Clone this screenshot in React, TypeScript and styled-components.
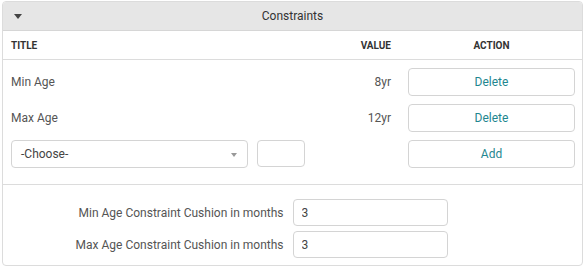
import styled, { createGlobalStyle } from "styled-components";

const GlobalStyle = createGlobalStyle`
  html, body {
    margin: 0;
    padding: 0;
    background: #fff;
    font-family: Roboto, "Liberation Sans", sans-serif;
  }
  * { box-sizing: border-box; }
`;

const Panel = styled.div`
  margin: 1px 2px;
  border: 1px solid #dcdcdc;
  border-radius: 4px;
  overflow: hidden;
  background: #fff;
`;

const PanelHeader = styled.div`
  position: relative;
  height: 29px;
  background: #e6e6e6;
  border-bottom: 1px solid #d6d6d6;
  display: flex;
  align-items: center;
  justify-content: center;
  font-size: 12px;
  color: #333;
`;

const Caret = styled.span`
  position: absolute;
  left: 11px;
  top: 12px;
  width: 0;
  height: 0;
  border-left: 4px solid transparent;
  border-right: 4px solid transparent;
  border-top: 5px solid #444;
`;

const Grid = styled.div`
  display: grid;
  grid-template-columns: minmax(0, 1fr) 80px 167px;
  column-gap: 17px;
  align-items: center;
  padding: 0 7px 0 8px;
`;

const HeadRow = styled(Grid)`
  height: 29px;
  border-bottom: 1px solid #dcdcdc;
`;

const Th = styled.div<{ $align?: string }>`
  font-size: 10px;
  font-weight: 700;
  color: #333;
  text-align: ${(p) => p.$align || "left"};
`;

const Body = styled(Grid)`
  row-gap: 8px;
  padding-top: 8px;
  padding-bottom: 16px;
  border-bottom: 1px solid #dcdcdc;
`;

const Cell = styled.div<{ $align?: string }>`
  font-size: 12px;
  color: #555;
  text-align: ${(p) => p.$align || "left"};
`;

const Button = styled.button`
  height: 28px;
  width: 100%;
  padding: 0;
  background: #fff;
  border: 1px solid #d4d4d4;
  border-radius: 4px;
  font-family: inherit;
  font-size: 12px;
  color: #1f8790;
  cursor: pointer;
`;

const Controls = styled.div`
  display: flex;
  gap: 9px;
`;

const Select = styled.div`
  position: relative;
  flex: none;
  width: 237px;
  height: 28px;
  border: 1px solid #d4d4d4;
  border-radius: 4px;
  display: flex;
  align-items: center;
  padding-left: 9px;
  font-size: 12px;
  color: #444;
`;

const SelectArrow = styled.span`
  position: absolute;
  right: 10px;
  top: 12px;
  border-left: 3px solid transparent;
  border-right: 3px solid transparent;
  border-top: 4px solid #999;
`;

const Input = styled.input<{ $width: number }>`
  flex: none;
  width: ${(p) => p.$width}px;
  height: 27px;
  border: 1px solid #d4d4d4;
  border-radius: 4px;
  padding: 0 8px;
  font-family: inherit;
  font-size: 12px;
  color: #444;
  outline: none;
`;

const Settings = styled.div`
  display: grid;
  grid-template-columns: 50% auto;
  row-gap: 5px;
  align-items: center;
  padding: 14px 0 7px;
`;

const Label = styled.label`
  text-align: right;
  padding-right: 9px;
  font-size: 12px;
  color: #555;
`;

const rows = [
  { title: "Min Age", value: "8yr" },
  { title: "Max Age", value: "12yr" },
];

const App = () => {
  return (
    <>
      <GlobalStyle />
      <Panel>
        <PanelHeader>
          <Caret />
          Constraints
        </PanelHeader>
        <HeadRow>
          <Th>TITLE</Th>
          <Th $align="right">VALUE</Th>
          <Th $align="center">ACTION</Th>
        </HeadRow>
        <Body>
          {rows.map((r) => (
            <>
              <Cell key={r.title}>{r.title}</Cell>
              <Cell $align="right">{r.value}</Cell>
              <Button>Delete</Button>
            </>
          ))}
          <Controls>
            <Select>
              -Choose-
              <SelectArrow />
            </Select>
            <Input $width={48} defaultValue="" />
          </Controls>
          <div />
          <Button>Add</Button>
        </Body>
        <Settings>
          <Label>Min Age Constraint Cushion in months</Label>
          <Input $width={155} defaultValue="3" />
          <Label>Max Age Constraint Cushion in months</Label>
          <Input $width={155} defaultValue="3" />
        </Settings>
      </Panel>
    </>
  );
};

export default App;
